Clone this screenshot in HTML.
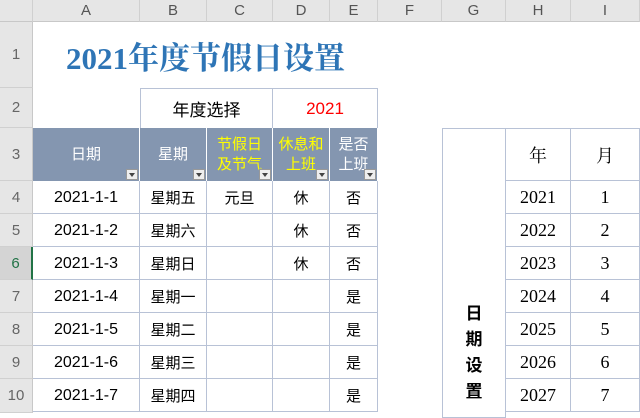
<!DOCTYPE html>
<html><head><meta charset="utf-8"><style>
*{margin:0;padding:0;box-sizing:border-box}
body{width:640px;height:413px;overflow:hidden;background:#fff;font-family:"Liberation Sans","Noto Sans CJK SC",sans-serif;position:relative}
.a{position:absolute;display:flex;align-items:center;justify-content:center;white-space:nowrap}
.ch{background:#e6e6e6;color:#555;font-size:15px;border-right:1px solid #d0d0d0;border-bottom:1px solid #c8c8c8;top:0;height:22px}
.rh{background:#e6e6e6;color:#666;font-size:15px;left:0;width:33px;border-bottom:1px solid #d0d0d0;border-right:1px solid #c8c8c8}
.c{font-size:15px;color:#000;border-right:1px solid #b8c2d6;border-bottom:1px solid #b8c2d6}
.h{background:#8496b0;color:#fff;font-size:15px;border-right:1px solid #fff;line-height:20px;text-align:center}
.y{color:#ffff00}
.dd{position:absolute;right:1px;bottom:1px;width:12px;height:11px;background:#eee;border:1px solid #999}
.dd:after{content:"";position:absolute;left:2px;top:3px;border-left:3px solid transparent;border-right:3px solid transparent;border-top:4px solid #444}
.s{font-family:"Liberation Serif","Noto Serif CJK SC",serif;font-size:18px}
</style></head><body>
<div class="a ch" style="left:0;width:33px"></div>
<div class="a ch" style="left:33px;width:107px">A</div>
<div class="a ch" style="left:140px;width:67px">B</div>
<div class="a ch" style="left:207px;width:66px">C</div>
<div class="a ch" style="left:273px;width:57px">D</div>
<div class="a ch" style="left:330px;width:48px">E</div>
<div class="a ch" style="left:378px;width:64px">F</div>
<div class="a ch" style="left:442px;width:64px">G</div>
<div class="a ch" style="left:506px;width:65px">H</div>
<div class="a ch" style="left:571px;width:69px">I</div>
<div class="a rh" style="top:22px;height:66px">1</div>
<div class="a rh" style="top:88px;height:40px">2</div>
<div class="a rh" style="top:128px;height:53px">3</div>
<div class="a rh" style="top:181px;height:33px">4</div>
<div class="a rh" style="top:214px;height:33px">5</div>
<div class="a rh" style="top:247px;height:33px;background:#d4d4d4;color:#217346;border-right:2px solid #217346">6</div>
<div class="a rh" style="top:280px;height:33px">7</div>
<div class="a rh" style="top:313px;height:33px">8</div>
<div class="a rh" style="top:346px;height:33px">9</div>
<div class="a rh" style="top:379px;height:34px">10</div>

<div class="a" style="left:33px;top:22px;width:345px;height:66px;font-family:'Liberation Serif','Noto Serif CJK SC',serif;font-weight:bold;font-size:31px;color:#2e75b6">2021年度节假日设置</div>
<div class="a" style="left:140px;top:88px;width:133px;height:40px;font-size:17px;border:1px solid #b8c2d6;border-bottom:none">年度选择</div>
<div class="a" style="left:273px;top:88px;width:105px;height:40px;font-size:17px;color:#f00;border-top:1px solid #b8c2d6;border-right:1px solid #b8c2d6">2021</div>

<div class="a h" style="left:33px;top:128px;width:107px;height:53px">日期<div class="dd"></div></div>
<div class="a h" style="left:140px;top:128px;width:67px;height:53px">星期<div class="dd"></div></div>
<div class="a h y" style="left:207px;top:128px;width:66px;height:53px;overflow:hidden">节假日<br>及节气<div class="dd"></div></div>
<div class="a h y" style="left:273px;top:128px;width:57px;height:53px;overflow:hidden">休息和<br>上班<div class="dd"></div></div>
<div class="a h" style="left:330px;top:128px;width:48px;height:53px;overflow:hidden">是否<br>上班<div class="dd"></div></div>

<div id="rows"></div>
<script>
var d=[["2021-1-1","星期五","元旦","休","否"],["2021-1-2","星期六","","休","否"],["2021-1-3","星期日","","休","否"],["2021-1-4","星期一","","","是"],["2021-1-5","星期二","","","是"],["2021-1-6","星期三","","","是"],["2021-1-7","星期四","","","是"]];
var xs=[33,140,207,273,330,378],h="";
d.forEach(function(r,i){var t=181+i*33;r.forEach(function(v,j){h+='<div class="a c" style="left:'+xs[j]+'px;top:'+t+'px;width:'+(xs[j+1]-xs[j])+'px;height:33px;'+(j==0?'font-size:16px;padding-top:2px;':'')+'">'+v+'</div>';});});
var ys=[2021,2022,2023,2024,2025,2026,2027];
h+='<div class="a c" style="left:442px;top:128px;width:64px;height:290px;border-left:1px solid #b8c2d6;border-top:1px solid #b8c2d6;flex-direction:column;padding-top:160px;font-size:17px;line-height:26px;font-weight:bold">日<br>期<br>设<br>置</div>';
h+='<div class="a c s" style="left:506px;top:128px;width:65px;height:53px;border-top:1px solid #b8c2d6">年</div>';
h+='<div class="a c s" style="left:571px;top:128px;width:69px;height:53px;border-top:1px solid #b8c2d6">月</div>';
ys.forEach(function(y,i){var t=181+i*33;h+='<div class="a c s" style="left:506px;top:'+t+'px;width:65px;height:33px">'+y+'</div><div class="a c s" style="left:571px;top:'+t+'px;width:69px;height:33px">'+(i+1)+'</div>';});
document.getElementById("rows").innerHTML=h;
</script>
</body></html>
